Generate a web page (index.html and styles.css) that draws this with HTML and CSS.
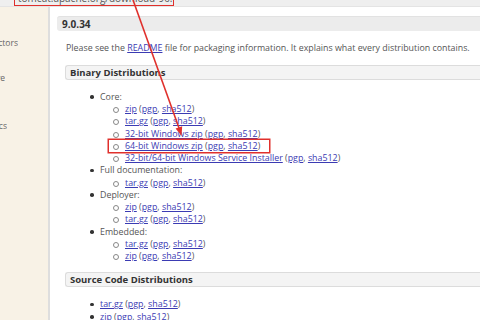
FILE: index.html
```html
<!DOCTYPE html>
<html lang="en">
<head>
<meta charset="utf-8">
<title>Apache Tomcat 9 Downloads</title>
<link rel="stylesheet" href="styles.css">
</head>
<body>
<div class="toolbar">
  <div class="url">tomcat.apache.org/download-90.cgi</div>
</div>
<div class="page">
  <nav class="sidebar">
    <div class="side-item s1"><span>Tomcat Connectors</span></div>
    <div class="side-item s2"><span>Tomcat Native</span></div>
    <div class="side-item s3"><span>Statistics</span></div>
  </nav>
  <main class="main">
    <h2 class="version">9.0.34</h2>
    <div class="section">
      <p class="intro">Please see the <a href="#">README</a> file for packaging information. It explains what every distribution contains.</p>
      <h3 class="box">Binary Distributions</h3>
      <ul class="l1">
        <li>Core:
          <ul class="l2">
            <li><a href="#">zip</a> (<a href="#">pgp</a>, <a href="#">sha512</a>)</li>
            <li><a href="#">tar.gz</a> (<a href="#">pgp</a>, <a href="#">sha512</a>)</li>
            <li><a href="#">32-bit Windows zip</a> (<a href="#">pgp</a>, <a href="#">sha512</a>)</li>
            <li class="hl"><a href="#">64-bit Windows zip</a> (<a href="#">pgp</a>, <a href="#">sha512</a>)</li>
            <li><a href="#">32-bit/64-bit Windows Service Installer</a> (<a href="#">pgp</a>, <a href="#">sha512</a>)</li>
          </ul>
        </li>
        <li>Full documentation:
          <ul class="l2">
            <li><a href="#">tar.gz</a> (<a href="#">pgp</a>, <a href="#">sha512</a>)</li>
          </ul>
        </li>
        <li>Deployer:
          <ul class="l2">
            <li><a href="#">zip</a> (<a href="#">pgp</a>, <a href="#">sha512</a>)</li>
            <li><a href="#">tar.gz</a> (<a href="#">pgp</a>, <a href="#">sha512</a>)</li>
          </ul>
        </li>
        <li>Embedded:
          <ul class="l2">
            <li><a href="#">tar.gz</a> (<a href="#">pgp</a>, <a href="#">sha512</a>)</li>
            <li><a href="#">zip</a> (<a href="#">pgp</a>, <a href="#">sha512</a>)</li>
          </ul>
        </li>
      </ul>
      <h3 class="box src-box">Source Code Distributions</h3>
      <ul class="l1 src">
        <li><a href="#">tar.gz</a> (<a href="#">pgp</a>, <a href="#">sha512</a>)</li>
        <li><a href="#">zip</a> (<a href="#">pgp</a>, <a href="#">sha512</a>)</li>
      </ul>
    </div>
  </main>
</div>
<svg class="arrow" width="480" height="320" viewBox="0 0 480 320">
  <line x1="133" y1="0" x2="179" y2="128" stroke="#e0302c" stroke-width="1.6"/>
  <path d="M181.5 136 L175.6 128.6 L182.2 126.3 Z" fill="#e0302c"/>
</svg>
</body>
</html>
```

FILE: styles.css
```css
* { box-sizing: border-box; }
html, body {
  margin: 0;
  padding: 0;
  width: 480px;
  height: 320px;
  overflow: hidden;
  background: #ffffff;
  font-family: "Open Sans", "Noto Sans", sans-serif;
  color: #555;
}
body { position: relative; }

.toolbar {
  height: 7px;
  background: #efefef;
  border-bottom: 1px solid #e4e4e4;
  overflow: hidden;
}
.url {
  margin-left: 14px;
  margin-top: -8px;
  width: 160px;
  height: 14px;
  border: 1.5px solid #e0302c;
  font-size: 10px;
  line-height: 11px;
  padding-left: 3px;
  color: #555;
  white-space: nowrap;
  overflow: hidden;
}

.page {
  display: flex;
  height: 313px;
}
.sidebar {
  width: 50px;
  flex: none;
  background: #f8f2e6;
  border-right: 2px solid #dedede;
  padding-top: 30px;
  font-size: 8.5px;
  color: #666;
}
.side-item {
  display: flex;
  justify-content: flex-end;
  overflow: hidden;
  white-space: nowrap;
  line-height: 12px;
}
.s1 { width: 18px; }
.s2 { width: 5px; margin-top: 23px; }
.s3 { width: 7px; margin-top: 36px; }

.main {
  flex: 1;
  padding-left: 7px;
  padding-top: 9px;
  font-size: 8.85px;
  line-height: 12.25px;
}
.version {
  margin: 0;
  height: 15px;
  background: #ececec;
  border-top: 1px solid #e2e2e2;
  border-radius: 3px 0 0 3px;
  font-size: 10px;
  font-weight: 700;
  line-height: 14px;
  padding-left: 5px;
  color: #333;
}
.section { padding-left: 8px; }
.intro {
  margin: 11px 0 0 1px;
  color: #555;
}
a { color: #3b3bb3; text-decoration: underline; }

.box {
  margin: 10.5px 0 0;
  height: 15px;
  background: #f4f4f4;
  border: 1px solid #dcdcdc;
  border-right: none;
  border-radius: 3px 0 0 3px;
  font-size: 9.5px;
  font-weight: 700;
  line-height: 13px;
  padding-left: 4px;
  color: #333;
}
.box.src-box { margin-top: 9.5px; }

ul { list-style: none; margin: 0; padding: 0; }
.l1 { margin-top: 11px; padding-left: 35px; }
.l1.src { margin-top: 11.5px; }
.l1 > li { position: relative; }
.l1 > li::before {
  content: "";
  position: absolute;
  left: -10px;
  top: 4.5px;
  width: 3.5px;
  height: 3.5px;
  border-radius: 50%;
  background: #333;
}
.l2 { padding-left: 25px; }
.l2 > li { position: relative; }
.l2 > li::before {
  content: "";
  position: absolute;
  left: -12px;
  top: 4px;
  width: 4px;
  height: 4px;
  border-radius: 50%;
  border: 1px solid #888;
}
.l2 > li.hl {
  width: fit-content;
  margin-left: -16px;
  padding-left: 16px;
  padding-right: 9px;
  box-shadow: 0 0 0 1.5px #e0302c;
}
.l2 > li.hl::before { left: 4px; }

.arrow {
  position: absolute;
  left: 0;
  top: 0;
  pointer-events: none;
}
```
